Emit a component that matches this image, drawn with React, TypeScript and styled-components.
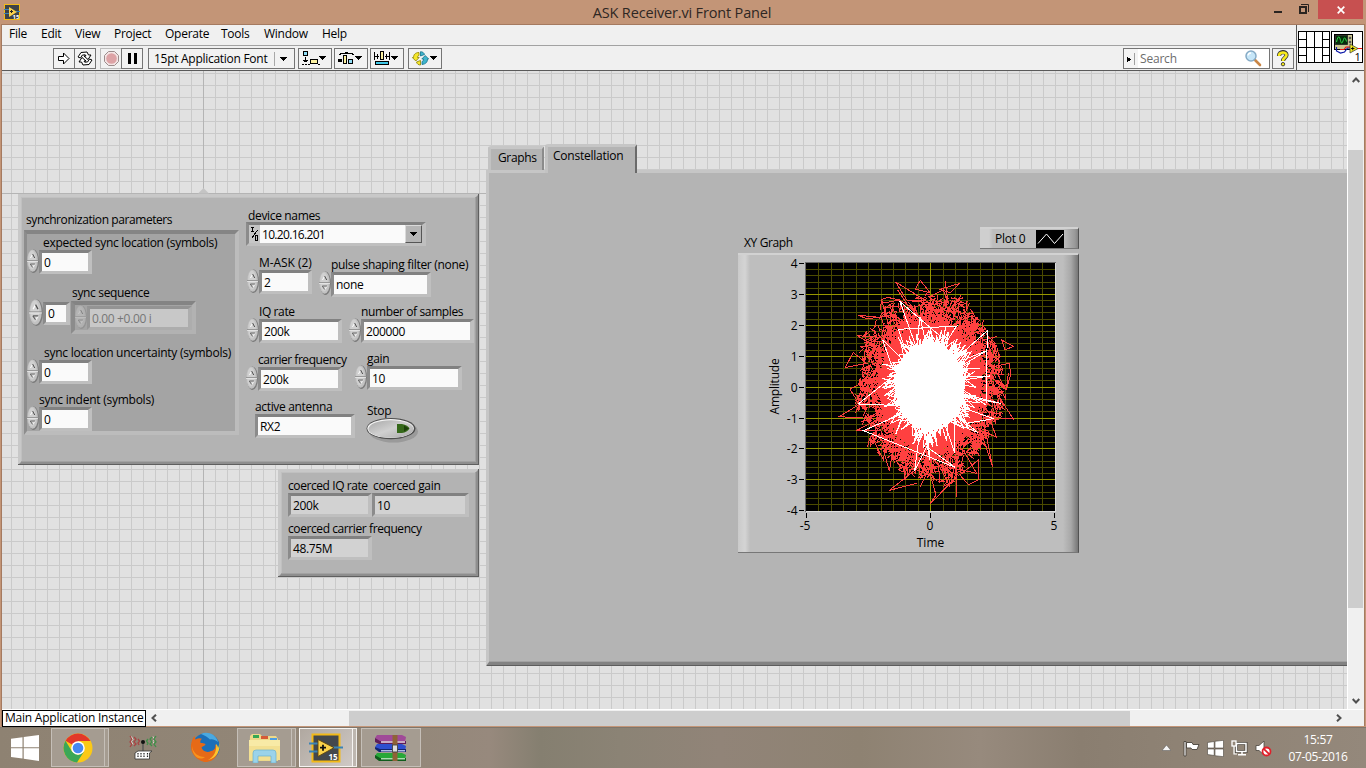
import React from "react";
import styled, { createGlobalStyle, css } from "styled-components";

const GlobalStyle = createGlobalStyle`
  * { box-sizing: border-box; }
  body { margin: 0; overflow: hidden; }
  #root { font-family: "Open Sans", "Noto Sans", sans-serif; font-size: 12px; color: #000; }
  svg { display: block; flex: none; }
`;

/* ---------- window frame ---------- */

const Desktop = styled.div`
  width: 1366px;
  height: 768px;
  display: flex;
  flex-direction: column;
  background: #c39577;
`;

const TitleBar = styled.header`
  height: 24px;
  flex: none;
  display: grid;
  grid-template-columns: 100px 1fr 100px;
  background: #c39577;
`;

const TitleIcon = styled.div`
  padding: 4px 0 0 4px;
`;

const TitleText = styled.div`
  text-align: center;
  font-size: 14.5px;
  line-height: 26px;
  letter-spacing: -0.16px;
  padding-right: 2px;
  color: #2e2723;
`;

const WindowButtons = styled.div`
  display: flex;
  justify-content: flex-end;
  padding-right: 3px;
`;

const CloseButton = styled.div`
  width: 45px;
  height: 19px;
  background: #c75050;
  display: flex;
  align-items: center;
  justify-content: center;
`;

const WindowGlyph = styled.div<{ $w: number }>`
  width: ${(p) => p.$w}px;
  height: 19px;
`;

const WindowBody = styled.div`
  height: 702px;
  flex: none;
  margin: 0 1px;
  border: 1px solid #a57a60;
  border-bottom: 0;
  display: flex;
  flex-direction: column;
  background: #f0f0f0;
`;

const Header = styled.div`
  height: 46px;
  flex: none;
  display: flex;
  border-bottom: 1px solid #5a5a5a;
`;

const HeaderMain = styled.div`
  width: 1294px;
  display: flex;
  flex-direction: column;
`;

const MenuBar = styled.nav`
  height: 21px;
  display: flex;
  border-bottom: 1px solid #a2a2a2;
`;

const MenuItem = styled.span<{ $w: number }>`
  width: ${(p) => p.$w}px;
  line-height: 18px;
  letter-spacing: -0.25px;
  white-space: nowrap;
  &:first-child { margin-left: 7px; }
`;

const Toolbar = styled.div`
  display: flex;
  padding: 2px 2px 0 51px;
`;

const ToolButton = styled.div<{ $w: number; $ml?: number; $dim?: boolean }>`
  width: ${(p) => p.$w}px;
  height: 21px;
  margin-left: ${(p) => p.$ml ?? 0}px;
  border: 1px solid ${(p) => (p.$dim ? "#bcbcbc" : "#757575")};
  background: #f2f2f2;
  display: flex;
  align-items: center;
  justify-content: center;
  flex: none;
`;

const FontPicker = styled(ToolButton)`
  justify-content: flex-start;
  padding-left: 5px;
  letter-spacing: -0.28px;
  white-space: nowrap;
`;

const FontName = styled.span`
  width: 120px;
  line-height: 18px;
`;

const PickerArrow = styled.span`
  height: 14px;
  border-left: 1px solid #a8a8a8;
  display: flex;
  align-items: center;
  padding-left: 5px;
`;

const SearchBox = styled(ToolButton)`
  margin-left: auto;
  justify-content: flex-start;
  background: #fff;
`;

const SearchHandle = styled.span`
  width: 14px;
  height: 19px;
  background: #f4f4f4;
  display: flex;
  align-items: center;
`;

const SearchText = styled.span`
  width: 106px;
  padding-left: 2px;
  color: #6d6d6d;
  line-height: 19px;
  letter-spacing: -0.2px;
`;

const HeaderSide = styled.div`
  flex: 1;
  border-left: 1px solid #5a5a5a;
  display: flex;
  gap: 1px;
  padding: 6px 0 0 1px;
`;

/* ---------- work area ---------- */

const WorkRow = styled.div`
  flex: 1;
  min-height: 0;
  display: flex;
`;

const Canvas = styled.main`
  position: relative;
  width: 1345px;
  overflow: hidden;
  background-color: #e1e1e1;
  background-image:
    linear-gradient(#b4b4b4, #b4b4b4),
    linear-gradient(#b4b4b4, #b4b4b4),
    linear-gradient(90deg, #cacaca 1px, transparent 1px),
    linear-gradient(#cacaca 1px, transparent 1px);
  background-size: 1px 100%, 100% 1px, 12px 12px, 12px 12px;
  background-position: 201px 0, 0 122px, 9px 0, 0 2px;
  background-repeat: no-repeat, no-repeat, repeat, repeat;
`;

const OriginMark = styled.svg`
  position: absolute;
  left: 196px;
  top: 117px;
`;

const VScroll = styled.div`
  flex: 1;
  border-left: 1px solid #fff;
  padding-right: 1px;
  display: flex;
  flex-direction: column;
  align-items: center;
`;

const VThumb = styled.div`
  width: 100%;
  height: 458px;
  margin-top: 63px;
  background: #cdcdcd;
`;

const VArrow = styled.div<{ $mt: number }>`
  height: 10px;
  margin-top: ${(p) => p.$mt}px;
`;

const BottomRow = styled.div`
  height: 17px;
  flex: none;
  display: flex;
  align-items: center;
  border-top: 1px solid #fff;
`;

const InstanceLabel = styled.div`
  width: 144px;
  height: 17px;
  border: 1px solid #000;
  background: #fff;
  line-height: 13px;
  padding-left: 2px;
  letter-spacing: -0.22px;
  white-space: nowrap;
`;

const HThumb = styled.div`
  width: 781px;
  height: 15px;
  margin-left: 190px;
  background: #cdcdcd;
`;

/* ---------- front panel objects ---------- */

const Cluster = styled.section<{ $x: number; $y: number; $w: number; $h: number }>`
  position: absolute;
  left: ${(p) => p.$x}px;
  top: ${(p) => p.$y}px;
  width: ${(p) => p.$w}px;
  height: ${(p) => p.$h}px;
  border: 3px solid;
  border-color: #c8c8c8 #8e8e8e #8e8e8e #c8c8c8;
  background: #b3b3b3;
  box-shadow: inset -1px -1px #a2a2a2, inset 1px 1px #c0c0c0;
  display: flex;
  &::after {
    content: "";
    position: absolute;
    inset: -3px;
    border: solid #5f5f5f;
    border-width: 0 1px 1px 0;
  }
`;

const SyncColumn = styled.div`
  width: 225px;
  padding: 15px 0 0 3px;
`;

const SettingsColumn = styled.div`
  flex: 1;
  padding-top: 10px;
`;

const CoercedColumn = styled.div`
  padding: 5px 0 0 7px;
`;

const Caption = styled.div`
  height: 15px;
  line-height: 15px;
  padding-left: 2px;
  letter-spacing: -0.42px;
  white-space: nowrap;
`;

const SyncBox = styled.div`
  width: 215px;
  height: 205px;
  margin-top: 3px;
  border: 4px solid;
  border-left-width: 3px;
  border-color: #858585 #bcbcbc #bcbcbc #8d8d8d;
  background: #a4a4a4;
`;

const Row = styled.div<{ $h: number }>`
  height: ${(p) => p.$h}px;
  display: flex;
`;

const ControlRoot = styled.div<{ $w: number; $ml: number; $mt: number }>`
  width: ${(p) => p.$w}px;
  flex: none;
  margin: ${(p) => p.$mt}px 0 0 ${(p) => p.$ml}px;
`;

const ControlLabel = styled.div<{ $indent: number; $ls: number }>`
  height: 15px;
  line-height: 17px;
  padding-left: ${(p) => p.$indent}px;
  letter-spacing: ${(p) => p.$ls}px;
  white-space: nowrap;
`;

const ControlBody = styled.div`
  display: flex;
  align-items: flex-start;
`;

const Recess = styled.div<{ $w: number; $h: number; $mt?: number; $tone?: "edit" | "read" | "dim" }>`
  width: ${(p) => p.$w}px;
  height: ${(p) => p.$h}px;
  margin-top: ${(p) => p.$mt ?? 1}px;
  flex: none;
  border: 3px solid;
  border-width: 3px 4px 3px 3px;
  border-color: #818181 #bfbfbf #bfbfbf #8b8b8b;
  background: #fafafa;
  padding-left: 2px;
  display: flex;
  align-items: center;
  line-height: 17px;
  letter-spacing: -0.35px;
  white-space: nowrap;
  ${(p) => p.$tone === "read" && css`background: #d2d2d2;`}
  ${(p) =>
    p.$tone === "dim" &&
    css`
      background: #c8c8c8;
      color: #767676;
      border-color: #949494 #adadad #adadad #969696;
    `}
`;

const ArrayFrame = styled.div`
  width: 125px;
  height: 33px;
  margin: 2px 0 0 1px;
  border: 4px solid;
  border-color: #848484 #b2b2b2 #b2b2b2 #8c8c8c;
  background: #a4a4a4;
  display: flex;
`;

const DeviceBox = styled.div`
  width: 180px;
  height: 24px;
  border: 3px solid;
  border-right-width: 4px;
  border-color: #818181 #bfbfbf #bfbfbf #8b8b8b;
  background: #fafafa;
  display: flex;
`;

const IoTag = styled.div`
  width: 11px;
  background: #c6c6c6;
`;

const DeviceValue = styled.div`
  flex: 1;
  padding-left: 2px;
  line-height: 19px;
  letter-spacing: -0.68px;
`;

const DropButton = styled.div`
  width: 17px;
  height: 18px;
  background: #b5b5b5;
  border: 1px solid;
  border-color: #dadada #555 #555 #dadada;
  display: flex;
  align-items: center;
  justify-content: center;
`;

/* ---------- tab control ---------- */

const TabControl = styled.section`
  position: absolute;
  left: 484px;
  top: 73px;
  width: 900px;
`;

const TabRow = styled.div`
  height: 26px;
  display: flex;
  align-items: flex-end;
  padding-left: 2px;
`;

const Tab = styled.div<{ $active?: boolean; $w: number }>`
  width: ${(p) => p.$w}px;
  height: ${(p) => (p.$active ? 29 : 24)}px;
  margin: 0 0 ${(p) => (p.$active ? -3 : 0)}px ${(p) => (p.$active ? 1 : 0)}px;
  z-index: 1;
  border: solid;
  border-width: 3px 2px 0 3px;
  border-color: #c6c6c6 ${(p) => (p.$active ? "#6a6a6a" : "#8b8b8b")} #b4b4b4 #c2c2c2;
  border-radius: 3px 2px 0 0;
  background: #b4b4b4;
  padding-left: ${(p) => (p.$active ? 5 : 7)}px;
  line-height: 18px;
  letter-spacing: ${(p) => (p.$active ? -0.24 : -0.35)}px;
`;

const TabPage = styled.div`
  height: 496px;
  border: solid;
  border-width: 3px 0 4px 3px;
  border-color: #c6c6c6 #666 #828282 #c6c6c6;
  background: #b4b4b4;
  box-shadow: inset 0 -1px #a2a2a2;
  padding: 54px 0 0 249px;
  position: relative;
  &::after {
    content: "";
    position: absolute;
    left: -2px;
    right: 0;
    bottom: -4px;
    height: 1px;
    background: #5c5c5c;
  }
`;

const GraphHead = styled.div`
  width: 341px;
  height: 26px;
  display: flex;
  justify-content: space-between;
`;

const GraphTitle = styled.div`
  padding: 8px 0 0 6px;
  line-height: 16px;
  letter-spacing: -0.37px;
`;

const metalFrame = css`
  border: solid;
  border-width: 2px 1px 1px 0;
  border-color: #d2d2d2 #525252 #777 #bbb;
`;

const PlotLegend = styled.div`
  ${metalFrame}
  width: 99px;
  height: 22px;
  display: flex;
  align-items: center;
  padding-left: 15px;
  letter-spacing: -0.2px;
  background: linear-gradient(90deg, #cfcfcf 0 9px, #bdbdbd 13px 84px, #999 95px, #7c7c7c 99px);
`;

const LegendSwatch = styled.svg`
  margin-left: auto;
  margin-right: 14px;
`;

const GraphFrame = styled.div`
  ${metalFrame}
  width: 341px;
  height: 300px;
  background: linear-gradient(90deg, #cacaca 0, #d4d4d4 7px, #bebebe 12px, #bebebe 325px, #a8a8a8 333px, #6f6f6f 341px);
`;

/* ---------- taskbar ---------- */

const Taskbar = styled.footer`
  flex: 1;
  margin-top: 1px;
  display: flex;
  background: linear-gradient(90deg, #8e8272 0, #94887a 420px, #97897d 490px, #857f70 540px, #8b8375 620px, #918478 720px, #8e8272 860px, #978a7d 980px, #8a7e70 1080px, #8f8375 1200px, #94887b 1366px);
  border-top: 1px solid #7f766b;
`;

const TaskButton = styled.div<{ $w: number; $state?: "open" | "active" }>`
  width: ${(p) => p.$w}px;
  height: 39px;
  flex: none;
  display: flex;
  align-items: center;
  justify-content: center;
  border: 1px solid transparent;
  ${(p) => p.$state === "open" && css`border-color: #c5bfb8; background: #a59c91;`}
  ${(p) => p.$state === "active" && css`border-color: #f6f4f2; background: linear-gradient(135deg, #b0a8a0, #cfc9c5);`}
`;

const StackEdge = styled.div<{ $active?: boolean }>`
  width: 4px;
  height: 39px;
  border: 1px solid ${(p) => (p.$active ? "#efedea" : "#c5bfb8")};
  border-left: 0;
  background: ${(p) => (p.$active ? "#bdb6af" : "#a59c91")};
`;

const Gap = styled.div<{ $w: number }>`
  width: ${(p) => p.$w}px;
  flex: none;
`;

const Tray = styled.div`
  margin-left: auto;
  display: flex;
  align-items: center;
  padding-right: 10px;
`;

const Clock = styled.div`
  width: 76px;
  margin-left: 8px;
  text-align: center;
  color: #fff;
  line-height: 17px;
  letter-spacing: -0.35px;
  white-space: nowrap;
`;

/* ---------- small drawings ---------- */

const Caret = () => (
  <svg width="7" height="4" viewBox="0 0 7 4" shapeRendering="crispEdges"><path d="M0 0h7L3.5 4z" /></svg>
);

function Spinner({ large, dim }: { large?: boolean; dim?: boolean }) {
  const w = large ? 14 : 12;
  const h = large ? 27 : 24;
  return (
    <svg width={w} height={h} viewBox="0 0 12 24" preserveAspectRatio="none" opacity={dim ? 0.4 : 1}>
      <ellipse cx="6.4" cy="12.2" rx="5.6" ry="11.7" fill="#7c7c7c" />
      <ellipse cx="5.6" cy="11.6" rx="5.3" ry="11.2" fill="#c2c2c2" />
      <ellipse cx="5" cy="11" rx="3.8" ry="9.6" fill="#d0d0d0" />
      <path d="M0 11.500h12" stroke="#8a8a8a" strokeWidth=".9" />
      <path d="M0 12.400h11" stroke="#ececec" strokeWidth=".8" />
      <path d="M3.500 9L5.600 5" stroke="#fff" fill="none" />
      <path d="M5.600 5L7.700 9" stroke="#4a4a4a" fill="none" />
      <path d="M8 15L5.800 18.500" stroke="#f4f4f4" fill="none" />
      <path d="M3.300 15H8M3.300 15l2.300 3.500" stroke="#5c5c5c" strokeWidth=".9" fill="none" />
    </svg>
  );
}

const LvIcon = () => (
  <svg width="34" height="30" viewBox="0 0 34 30">
    <rect x="3.500" y="1.500" width="27" height="27" fill="#44484c" stroke="#f3ba17" strokeWidth="2" />
    <path d="M0 10.500h9M0 18.500h9M24 14.500h10" stroke="#3a84b5" strokeWidth="2" />
    <path d="M9 6.500v17l16-8.800z" fill="#fbd24a" stroke="#5c450c" strokeWidth=".9" />
    <path d="M11 14.700h6M14 11.700v6" stroke="#111" strokeWidth="1.800" />
    <text x="19.500" y="26.500" fontSize="8" fontWeight="700" fill="#fff">15</text>
  </svg>
);

const StopButton = () => (
  <svg width="56" height="28" viewBox="0 0 56 28">
    <defs>
      <linearGradient id="stopFace" x1="0" y1="0" x2="1" y2="1">
        <stop offset="0" stopColor="#a8a8a8" />
        <stop offset=".5" stopColor="#d0d0d0" />
        <stop offset="1" stopColor="#a8a8a8" />
      </linearGradient>
    </defs>
    <ellipse cx="27.500" cy="14.500" rx="24.500" ry="11" fill="#929292" opacity=".75" />
    <ellipse cx="25" cy="11.600" rx="24.500" ry="10.600" fill="#4e4e4e" />
    <ellipse cx="24.600" cy="11.500" rx="23.300" ry="9.500" fill="#f4f4f4" />
    <ellipse cx="25" cy="12" rx="22.600" ry="8.700" fill="url(#stopFace)" />
    <path d="M31 7h5c4 .7 6.500 2.500 7.500 4.500-1.500 2.500-4 4-7.500 4.500h-5z" fill="#35681a" />
    <path d="M38 8.500l5 3-5 3z" fill="#1d3f0a" />
  </svg>
);

/* ---------- front panel control ---------- */

type ControlProps = {
  label: string;
  value: string;
  box: number;
  boxH?: number;
  boxMt?: number;
  indent?: number;
  ml?: number;
  mt?: number;
  ls?: number;
  spinner?: boolean;
  tone?: "edit" | "read";
};

function Control({ label, value, box, boxH = 24, boxMt = 1, indent = 0, ml = 0, mt = 0, ls = -0.28, spinner = true, tone = "edit" }: ControlProps) {
  return (
    <ControlRoot $w={box + (spinner ? 12 : 0)} $ml={ml} $mt={mt}>
      <ControlLabel $indent={indent} $ls={ls}>{label}</ControlLabel>
      <ControlBody>
        {spinner && <Spinner />}
        <Recess $w={box} $h={boxH} $mt={boxMt} $tone={tone}>{value}</Recess>
      </ControlBody>
    </ControlRoot>
  );
}

/* ---------- constellation plot ---------- */

const SX = 24.9;
const SY = 31;

function rng(seed: number) {
  let s = seed;
  return () => {
    s = (s + 0x6d2b79f5) | 0;
    let t = Math.imul(s ^ (s >>> 15), 1 | s);
    t = (t + Math.imul(t ^ (t >>> 7), 61 | t)) ^ t;
    return ((t ^ (t >>> 14)) >>> 0) / 4294967296;
  };
}

const at = (a: number, r: number) =>
  `${(124 + Math.cos(a) * r * SX).toFixed(1)} ${(123.5 + Math.sin(a) * r * SY).toFixed(1)}`;

/* Short chords that thin out with the distance from the centre. */
function fringe() {
  const rand = rng(41);
  let d = "";
  for (let i = 0; i < 2300; i++) {
    const a = rand() * Math.PI * 2;
    const wobble = 0.12 * Math.sin(a * 5 + 1) + 0.08 * Math.sin(a * 11);
    const reach = 1.95 + Math.pow(rand(), 2.3) * (1.1 + wobble);
    d += `M${at(a, reach)}`;
    for (let k = 0; k < 2; k++) {
      d += `L${at(a + (rand() - 0.5) * 0.2, reach - rand() * 0.42 + 0.04)}`;
    }
  }
  return d;
}

/* Rays from the core, most of them short, with uneven sides. */
function spikes() {
  const rand = rng(19);
  let d = "";
  for (let i = 0; i < 300; i++) {
    const a = rand() * Math.PI * 2;
    const r = 1.38 + Math.pow(rand(), 3.2) * 0.7;
    d += `M${at(a - 0.5 * (rand() - 0.4), 1.28)}L${at(a, r)}L${at(a + 0.5 * (rand() - 0.4), 1.28)}`;
  }
  return d;
}

const RED_TRACES =
  "M410 540L327 590L400 594M345 443L370 398L410 430ZM360 508L410 480L380 540ZM385 286L450 292L410 296ZM382 347L450 352L420 370ZM497 186L600 250L530 240ZM556 207L571 181L600 218ZM690 190L630 208L660 218ZM645 184L655 250L640 270M718 250L700 290L725 280M850 379L815 360L825 390ZM838 430L842 465L828 510L790 440ZM800 520L850 597L790 592M755 640L788 742L770 650M780 600L800 652L750 630M745 780L715 794L690 765L745 720ZM679 830L678 740L690 720M600 852L618 825L600 760M600 852L680 770M560 790L478 811L550 755M440 600L377 633L450 632M460 690L478 752L490 680M450 640L420 680L430 640M452 240L472 232L510 240L455 250M430 660L460 720L470 660M520 740L525 780L560 720M570 800L600 740M630 790L625 730L660 800L650 730M760 300L752 340L730 300M800 350L760 360L800 380M503 210L530 250L505 240M600 230L640 210L650 240M524 780L526 700L610 770L560 750M650 740L740 760L700 690M835 460L830 500L800 480M450 270L455 240L480 330";
const WHITE_TRACES =
  "M565 400L510 245L635 352M640 380L680 318L505 328L530 400M520 420L458 360L490 450M690 405L772 332L768 555L700 510M510 557L385 552L500 460M700 530L812 550L690 520M520 580L400 632L675 742L590 680M570 630L554 752L610 640M690 560L790 596L710 610L680 580M670 580L743 637L650 600M640 600L675 700L672 600M590 620L600 720L580 620M700 420L770 392L690 440M560 380L570 290L590 380M700 470L780 468L700 480";

const COLS = Array.from({ length: 20 }, (_, i) => i);
const ROWS = Array.from({ length: 40 }, (_, i) => i);

function Plot() {
  return (
    <svg width="340" height="297" viewBox="738 255 340 297" fontSize="12">
      <g shapeRendering="crispEdges">
        <rect x="805" y="262" width="251" height="250" fill="#6c6c6c" />
        <rect x="806" y="263" width="250" height="249" fill="#dcdcdc" />
        <rect x="806" y="263" width="249" height="248" fill="#000" />
        {ROWS.slice(1).map((i) => (
          <rect key={i} x="806" y={Math.round(263 + i * 6.18)} width="249" height="1" fill="#4b4b00" />
        ))}
        {COLS.slice(1).map((i) => (
          <rect key={i} x={Math.round(806 + i * 12.42)} y="263" width="1" height="248" fill={i === 10 ? "#969600" : "#4b4b00"} />
        ))}
        {[1, 2, 3, 4, 5, 6, 7].map((i) => (
          <rect key={i} x="806" y={Math.round(263 + i * 30.9)} width="249" height="1" fill="#969600" />
        ))}
      </g>
      <g transform="translate(806 263)" fill="none" shapeRendering="crispEdges">
        <ellipse cx="124" cy="122" rx="50" ry="62" fill="#ff4040" />
        <path d={fringe()} stroke="#ff4040" />
        <g transform="translate(-76 -43) scale(.33333)">
          <path d={RED_TRACES} stroke="#ff4040" vectorEffect="non-scaling-stroke" />
        </g>
        <ellipse cx="123.500" cy="122" rx="35" ry="42" fill="#fff" />
        <path d={spikes()} stroke="#fff" />
        <g transform="translate(-76 -43) scale(.33333)">
          <path d={WHITE_TRACES} stroke="#fff" vectorEffect="non-scaling-stroke" />
        </g>
      </g>
      {[4, 3, 2, 1, 0, -1, -2, -3, -4].map((v, i) => {
        const y = Math.round(263 + i * 30.9);
        return (
          <g key={v}>
            <rect x="799" y={y} width="5" height="1" />
            <text x="797.500" y={y + 5} textAnchor="end">{v}</text>
          </g>
        );
      })}
      {[-5, 0, 5].map((v, i) => (
        <g key={v}>
          <rect x={806 + i * 124} y="513" width="1" height="5" />
          <text x={(v < 0 ? 805 : 806) + i * 124} y="530" textAnchor="middle">{v}</text>
        </g>
      ))}
      <text x="930.500" y="547" textAnchor="middle">Time</text>
      <text transform="translate(779 386.500) rotate(-90)" textAnchor="middle" letterSpacing="-.2">Amplitude</text>
    </svg>
  );
}

const MENUS: [string, number][] = [
  ["File", 32], ["Edit", 34], ["View", 39], ["Project", 51], ["Operate", 56], ["Tools", 43], ["Window", 58], ["Help", 30],
];

export default function App() {
  return (
    <Desktop>
      <GlobalStyle />
      <TitleBar>
        <TitleIcon>
          <svg width="16" height="16" viewBox="0 0 16 16">
            <rect x=".5" y=".5" width="15" height="15" fill="#3f4347" stroke="#f3ba17" />
            <path d="M0 5.500h5M0 9.500h5M12 7.500h4" stroke="#3a84b5" />
            <path d="M5 3v10l8-5z" fill="#fbd24a" />
            <path d="M6 7.500h3M7.500 6v3" stroke="#222" />
            <text x="8.500" y="14.500" fontSize="6" fontWeight="700" fill="#fff">15</text>
          </svg>
        </TitleIcon>
        <TitleText>ASK Receiver.vi Front Panel</TitleText>
        <WindowButtons>
          <WindowGlyph $w={25}>
            <svg width="25" height="19"><rect x="1" y="11" width="8" height="2" fill="#2a2420" /></svg>
          </WindowGlyph>
          <WindowGlyph $w={20}>
            <svg width="20" height="19" fill="none" stroke="#2a2420"><path d="M3 4.500h7.500V12" /><rect x="2" y="7" width="6" height="6" strokeWidth="2" /></svg>
          </WindowGlyph>
          <CloseButton>
            <svg width="8" height="8" viewBox="0 0 8 8"><path d="M.7 .7l6.600 6.600M7.300 .7L.7 7.300" stroke="#fff" strokeWidth="1.700" /></svg>
          </CloseButton>
        </WindowButtons>
      </TitleBar>

      <WindowBody>
        <Header>
          <HeaderMain>
            <MenuBar>
              {MENUS.map(([name, w]) => <MenuItem key={name} $w={w}>{name}</MenuItem>)}
            </MenuBar>
            <Toolbar>
              <ToolButton $w={22}>
                <svg width="12" height="13" viewBox="0 0 12 13"><path d="M.500 4.500h5V1l5.500 5.500L5.500 12V8.500h-5z" fill="#fff" stroke="#000" /></svg>
              </ToolButton>
              <ToolButton $w={22} $ml={-1}>
                <svg width="16" height="15" viewBox="0 0 16 15" fill="#fff" stroke="#000">
                  <path d="M1 6L4 1.500l6-.500L11.500 4h2.500l-3 4.500L7 5h2l-.7-1.200-3 .3L3.500 7z" />
                  <path d="M15 9l-3 4.500-6 .500L4.500 11H2l3-4.500L9 10H7l.7 1.200 3-.3L12.500 8z" />
                </svg>
              </ToolButton>
              <ToolButton $w={22} $ml={4} $dim>
                <svg width="15" height="15" viewBox="0 0 15 15"><path d="M4.500 .5h6l4 4v6l-4 4h-6l-4-4v-6z" fill="#f3e4e4" stroke="#9c8c8c" /><circle cx="7.500" cy="7.500" r="5.300" fill="#dda3a6" /></svg>
              </ToolButton>
              <ToolButton $w={22} $ml={-1}>
                <svg width="9" height="11"><path d="M0 0h3v11H0zM6 0h3v11H6z" /></svg>
              </ToolButton>
              <FontPicker $w={147} $ml={5}>
                <FontName>15pt Application Font</FontName>
                <PickerArrow><Caret /></PickerArrow>
              </FontPicker>
              <ToolButton $w={34} $ml={3}>
                <svg width="26" height="15" viewBox="0 0 26 15" shapeRendering="crispEdges">
                  <rect x="1.500" y=".5" width="4" height="4" fill="#8fdcf5" stroke="#000" />
                  <path d="M3 6h1v4H3zM1 9h5v1H1zM2 10h3v1H2zM0 13h2v1H0zM3 13h2v1H3zM6 13h2v1H6zM16 13h2v1h-2z" />
                  <rect x="8.500" y="8.500" width="7" height="4" fill="#fbf0a0" stroke="#000" />
                  <path d="M17 5h7l-3.500 4z" />
                </svg>
              </ToolButton>
              <ToolButton $w={34} $ml={2}>
                <svg width="26" height="15" viewBox="0 0 26 15" shapeRendering="crispEdges">
                  <path d="M1 3h1V2h5V1h3v1h5v1h1v1h-2V3H3v1H1zM0 8h4v3H0z" />
                  <rect x="5.500" y="4.500" width="3" height="8" fill="#fbf0a0" stroke="#000" />
                  <rect x="10.500" y="8.500" width="4" height="4" fill="#8fdcf5" stroke="#000" />
                  <path d="M17 5h7l-3.500 4z" />
                </svg>
              </ToolButton>
              <ToolButton $w={34} $ml={2}>
                <svg width="26" height="15" viewBox="0 0 26 15" shapeRendering="crispEdges">
                  <path d="M0 1h1v8H0zM15 1h1v8h-1zM1 5h4v1H1zM11 5h4v1h-4zM3 3h1v5H3zM12 3h1v5h-1z" />
                  <rect x="6.500" y=".5" width="3" height="8" fill="#fbf0a0" stroke="#000" />
                  <rect x="1.500" y="10.500" width="13" height="3" fill="#3fc6e6" stroke="#000" />
                  <path d="M17 5h7l-3.500 4z" />
                </svg>
              </ToolButton>
              <ToolButton $w={34} $ml={4}>
                <svg width="27" height="15" viewBox="0 0 27 15">
                  <path d="M7 1.500C3 1.500 1.500 4 1.500 6.500H.3L3.800 10l3.400-3.500H5.500C5.500 5.300 6 4.700 7 4.500zM4.500 11l4-1.500V14c-2 0-3.500-1-4-3z" fill="#f5e62a" stroke="#8b8200" strokeWidth=".8" />
                  <path d="M10 13.500c4-.5 5.500-2.500 5.500-5.500h1.200l-3.500-3.500L9.800 8h1.700c0 1.500-.5 2.300-1.500 2.500zM12.500 3.500L8.500 5V.7c2 0 3.500 1 4 2.800z" fill="#3fb4cc" stroke="#12718a" strokeWidth=".8" />
                  <path d="M18 5h7l-3.500 4z" shapeRendering="crispEdges" />
                </svg>
              </ToolButton>
              <SearchBox $w={147} style={{ marginLeft: "auto" }}>
                <SearchHandle>
                  <svg width="12" height="12" viewBox="0 0 12 12" shapeRendering="crispEdges"><path d="M3 4h1v5H3zM4 5h2v3H4zM6 6h1v1H6z" /><path d="M10 0h1v12h-1z" fill="#a0a0a0" /></svg>
                </SearchHandle>
                <SearchText>Search</SearchText>
                <svg width="18" height="17" viewBox="0 0 18 17">
                  <path d="M10.500 9.500l5.500 5.500" stroke="#c98646" strokeWidth="2.600" strokeLinecap="round" />
                  <circle cx="7" cy="6" r="5" fill="#c6e6f8" stroke="#86abc6" strokeWidth="1.500" />
                  <path d="M4 5.500a3 3 0 013-2.500" stroke="#fff" strokeWidth="1.300" fill="none" />
                </svg>
              </SearchBox>
              <ToolButton $w={22} $ml={2}>
                <svg width="14" height="17" viewBox="0 0 14 17" fill="none">
                  <path d="M3 6C3 1 10.500 1 10.500 5c0 2.800-3.500 2.800-3.500 6" stroke="#333" strokeWidth="4.200" />
                  <path d="M3 6C3 1.500 10.500 1.500 10.500 5c0 2.600-3.500 2.600-3.500 6" stroke="#f7ea1c" strokeWidth="2.600" />
                  <circle cx="7" cy="14.200" r="1.700" fill="#f7ea1c" stroke="#333" strokeWidth=".9" />
                </svg>
              </ToolButton>
            </Toolbar>
          </HeaderMain>
          <HeaderSide>
            <svg width="32" height="32" viewBox="0 0 32 32" shapeRendering="crispEdges">
              <rect x=".5" y=".5" width="31" height="31" fill="#fff" stroke="#000" />
              <path d="M8.500 0v32M16.500 0v32M24.500 0v32M0 16.500h32M0 8.500h8M24 8.500h8M0 24.500h8M24 24.500h8" stroke="#000" />
            </svg>
            <svg width="32" height="32" viewBox="0 0 32 32">
              <rect x=".5" y=".5" width="31" height="31" fill="#fff" stroke="#000" />
              <rect x="3.500" y="3.500" width="18" height="15" fill="#c9c691" stroke="#000" />
              <rect x="4.500" y="4.500" width="12" height="9" fill="#052d0a" stroke="#222" strokeWidth=".8" />
              <path d="M5.500 11c1.500-7 3-6 4-1.500s2 2 3-1 2-1.500 3 2" stroke="#2fe04a" fill="none" />
              <circle cx="19" cy="7" r="1.300" fill="#555" /><circle cx="19" cy="11" r="1.300" fill="#555" />
              <path d="M5.500 16v4l4 2 4-1 3-4h3" stroke="#0c17a8" strokeWidth="1.200" fill="none" />
              <path d="M9 18.500h4l2-2.500h5M25 17.500h6" stroke="#f01010" strokeWidth="1.200" fill="none" />
              <path d="M19 13v9l8-4.500z" fill="#f6ef1d" stroke="#444" strokeWidth=".8" />
              <path d="M20 17.500h3.500M21.700 15.800v3.500" stroke="#000" strokeWidth=".9" />
              <text x="23.500" y="29.500" fontSize="11">1</text>
            </svg>
          </HeaderSide>
        </Header>

        <WorkRow>
          <Canvas>
            <OriginMark width="11" height="6"><path d="M0 5.500L5.500 0 11 5.500z" fill="#c4c4c4" /></OriginMark>

            <Cluster $x={16} $y={123} $w={461} $h={271}>
              <SyncColumn>
                <Caption>synchronization parameters</Caption>
                <SyncBox>
                  <Row $h={50}><Control label="expected sync location (symbols)" value="0" box={53} indent={16} /></Row>
                  <Row $h={60}>
                    <ControlRoot $w={180} $ml={2} $mt={0}>
                      <ControlLabel $indent={43} $ls={-0.34}>sync sequence</ControlLabel>
                      <ControlBody>
                        <Spinner large />
                        <Recess $w={27} $h={23} $mt={3}>0</Recess>
                        <ArrayFrame>
                          <Spinner dim />
                          <Recess $w={105} $h={24} $mt={1} $tone="dim">0.00 +0.00 i</Recess>
                        </ArrayFrame>
                      </ControlBody>
                    </ControlRoot>
                  </Row>
                  <Row $h={47}><Control label="sync location uncertainty (symbols)" value="0" box={53} indent={17} ls={-0.25} /></Row>
                  <Row $h={44}><Control label="sync indent (symbols)" value="0" box={53} indent={12} ls={-0.25} /></Row>
                </SyncBox>
              </SyncColumn>

              <SettingsColumn>
                <Row $h={47}>
                  <ControlRoot $w={180} $ml={0} $mt={0}>
                    <ControlLabel $indent={2} $ls={-0.34}>device names</ControlLabel>
                    <DeviceBox>
                      <IoTag>
                        <svg width="11" height="18" viewBox="0 0 11 18" fill="none" stroke="#000" shapeRendering="crispEdges">
                          <path d="M2 2.500h3M3.500 2v5M2 6.500h3M8.500 5L3 13M6.500 10.500h2v5h-2z" />
                        </svg>
                      </IoTag>
                      <DeviceValue>10.20.16.201</DeviceValue>
                      <DropButton><Caret /></DropButton>
                    </DeviceBox>
                  </ControlRoot>
                </Row>
                <Row $h={49}>
                  <Control label="M-ASK (2)" value="2" box={53} indent={12} ml={1} ls={-0.05} />
                  <Control label="pulse shaping filter (none)" value="none" box={100} boxH={25} indent={12} ml={7} mt={2} ls={-0.3} />
                </Row>
                <Row $h={48}>
                  <Control label="IQ rate" value="200k" box={83} indent={12} ml={1} ls={-0.4} />
                  <Control label="number of samples" value="200000" box={113} indent={12} ml={7} ls={-0.38} />
                </Row>
                <Row $h={47}>
                  <Control label="carrier frequency" value="200k" box={84} indent={12} ls={-0.46} />
                  <Control label="gain" value="10" box={95} indent={12} ml={13} mt={-1} />
                </Row>
                <Row $h={44}>
                  <Control label="active antenna" value="RX2" box={100} ml={9} indent={0} spinner={false} ls={-0.34} />
                  <ControlRoot $w={56} $ml={11} $mt={4}>
                    <ControlLabel $indent={1} $ls={-0.27}>Stop</ControlLabel>
                    <StopButton />
                  </ControlRoot>
                </Row>
              </SettingsColumn>
            </Cluster>

            <Cluster $x={276} $y={398} $w={201} $h={108}>
              <CoercedColumn>
                <Row $h={43}>
                  <Control label="coerced IQ rate" value="200k" box={84} indent={0} spinner={false} tone="read" ls={-0.42} />
                  <Control label="coerced gain" value="10" box={97} indent={1} spinner={false} tone="read" ls={-0.3} />
                </Row>
                <Row $h={43}>
                  <Control label="coerced carrier frequency" value="48.75M" box={84} indent={0} spinner={false} tone="read" ls={-0.41} />
                </Row>
              </CoercedColumn>
            </Cluster>

            <TabControl>
              <TabRow>
                <Tab $w={56}>Graphs</Tab>
                <Tab $w={92} $active>Constellation</Tab>
              </TabRow>
              <TabPage>
                <GraphHead>
                  <GraphTitle>XY Graph</GraphTitle>
                  <PlotLegend>
                    Plot 0
                    <LegendSwatch width="28" height="18" viewBox="0 0 28 18">
                      <rect width="28" height="18" fill="#000" />
                      <path d="M2 13.500L10.500 4l8 9.500L27 4" stroke="#fff" fill="none" />
                    </LegendSwatch>
                  </PlotLegend>
                </GraphHead>
                <GraphFrame><Plot /></GraphFrame>
              </TabPage>
            </TabControl>
          </Canvas>
          <VScroll>
            <VArrow $mt={6}>
              <svg width="8" height="6" viewBox="0 0 8 6"><path d="M.7 5L4 1.500 7.300 5" stroke="#505050" strokeWidth="2" fill="none" /></svg>
            </VArrow>
            <VThumb />
            <VArrow $mt={90}>
              <svg width="8" height="6" viewBox="0 0 8 6"><path d="M.7 1L4 4.500 7.300 1" stroke="#505050" strokeWidth="2" fill="none" /></svg>
            </VArrow>
          </VScroll>
        </WorkRow>

        <BottomRow>
          <InstanceLabel>Main Application Instance</InstanceLabel>
          <Gap $w={4} />
          <svg width="8" height="8" viewBox="0 0 8 8"><path d="M6 .7L2.500 4 6 7.300" stroke="#505050" strokeWidth="2" fill="none" /></svg>
          <Gap $w={1} />
          <HThumb />
          <Gap $w={205} />
          <svg width="8" height="8" viewBox="0 0 8 8"><path d="M2 .7L5.500 4 2 7.300" stroke="#505050" strokeWidth="2" fill="none" /></svg>
        </BottomRow>
      </WindowBody>

      <Taskbar>
        <Gap $w={10} />
        <TaskButton $w={29}>
          <svg width="28" height="26" viewBox="0 0 28 26" fill="#fff"><path d="M0 3.800L11.500 2.200v10H0zM12.700 2L28 0v12.200H12.700zM0 13.300h11.500v10.200L0 22zM12.700 13.300H28V26l-15.300-2.200z" /></svg>
        </TaskButton>
        <Gap $w={12} />
        <TaskButton $w={54} $state="open">
          <svg width="30" height="30" viewBox="0 0 30 30">
            <circle cx="15" cy="15" r="14.500" fill="#fbc916" />
            <path d="M15 15L2.500 7.700A14.500 14.500 0 0127.600 8H15z" fill="#e2382a" />
            <path d="M2.500 7.700A14.500 14.500 0 0014 29.500l7-11-6 3.500-6-3.500z" fill="#3aa757" />
            <circle cx="15" cy="15" r="6.800" fill="#fff" /><circle cx="15" cy="15" r="5.300" fill="#4688f1" />
          </svg>
        </TaskButton>
        <StackEdge />
        <Gap $w={15} />
        <TaskButton $w={38}>
          <svg width="28" height="26" viewBox="0 0 28 26" fill="none">
            <path d="M1 1l2 3-2 3 2 2-2 3M5 2l2 2-2 3 2 2-2 2M9 4l1.500 2L9 8l1 2" stroke="#a84444" strokeWidth="1.300" />
            <path d="M2.500 1.500l1.500 3-1.500 2 1.500 3M24 1.500l1.500 3-1.500 2 1.500 3" stroke="#f0e4e0" strokeWidth=".8" />
            <path d="M27 1l-2 3 2 3-2 2 2 3M23 2l-2 2 2 3-2 2 2 2M19 4l-1.500 2L19 8l-1 2" stroke="#3f8f48" strokeWidth="1.300" />
            <path d="M14 8v10" stroke="#555" strokeWidth="1.300" /><circle cx="14" cy="7" r="2" fill="#111" />
            <path d="M6 18l3-2h14l-2.500 2v6H6z" fill="#fff" stroke="#333" strokeWidth=".8" />
            <path d="M9 18v5M12 18v5M15 18v5M18.500 18v5" stroke="#222" strokeWidth="1.200" strokeDasharray="1.500 1" />
          </svg>
        </TaskButton>
        <Gap $w={24} />
        <TaskButton $w={38}>
          <svg width="31" height="31" viewBox="0 0 31 31">
            <circle cx="16" cy="15" r="13.800" fill="#1c6fb8" />
            <path d="M11 2c6-3 15 0 17 8-3-2-5-3-8-2.500-2-2-5-4-9-5.500z" fill="#4aa9e0" />
            <path d="M1 13C1.500 8.500 3 5.500 4.500 4l1 3.500C8 6 10 6 12 6.800 10.500 8 10 9 10.500 11c2.500 0 5 .5 5 1.500s-3.500 2-4 3c1 4 6 5.500 9.500 3.500 4-.5 5-4 4-7 3 3 4 7 2 11-3 5-7 7-11.500 7S0 24 1 13z" fill="#e66a17" />
            <path d="M29 10c2 8-2 16-11 18 6-3 9-9 8-16 1.500 1 2 3 2 4 1-1.500 1.200-4 1-6z" fill="#fbc52e" />
            <path d="M2 14c1 7 6 11 13 11-5 4-13 0-13-11z" fill="#f7941e" />
          </svg>
        </TaskButton>
        <Gap $w={13} />
        <TaskButton $w={55} $state="open">
          <svg width="33" height="30" viewBox="0 0 33 30">
            <path d="M2 3l2-2h8l2 2h14l2 3v22H1z" fill="#ecd98a" />
            <path d="M5 2h6v3H5z" fill="#35a853" /><path d="M13 3h7v3h-7z" fill="#d65b35" /><path d="M22 5h7v3h-7z" fill="#4f9de0" />
            <path d="M1 7h31v20H1z" fill="#f8eaa6" /><path d="M1 13h31v14H1z" fill="#f3e092" />
            <path d="M5 30V20q0-3 3-3h17q3 0 3 3v10h-5v-7H10v7z" fill="#9bd3ea" stroke="#6cb2cf" strokeWidth=".7" />
          </svg>
        </TaskButton>
        <StackEdge />
        <Gap $w={3} />
        <TaskButton $w={54} $state="active"><LvIcon /></TaskButton>
        <StackEdge $active />
        <Gap $w={4} />
        <TaskButton $w={60} $state="open">
          <svg width="34" height="26" viewBox="0 0 34 26">
            <path d="M3 0h25l4 2-1 5H6L1 3z" fill="#a04a98" /><path d="M1 3l5 3h26v3H5L1 7z" fill="#5e1d59" /><path d="M7 6h24v2H7z" fill="#c9a9c6" />
            <path d="M3 9h25l4 2-1 5H6l-5-4z" fill="#2f4fd0" /><path d="M1 12l5 2h26v3H5l-4-3z" fill="#14246e" /><path d="M7 15h24v1.500H7z" fill="#aeb8e2" />
            <path d="M3 18h25l4 2-1 5H6l-5-4z" fill="#27a838" /><path d="M1 20l5 3h26v3H5l-4-3z" fill="#0f5c1c" /><path d="M7 23h24v1.500H7z" fill="#a9dcae" />
            <path d="M18.500 0h5v26h-5z" fill="#8f6236" /><rect x="18.500" y="10" width="5" height="7" fill="#ddd" stroke="#444" strokeWidth=".9" />
          </svg>
        </TaskButton>

        <Tray>
          <svg width="9" height="6" viewBox="0 0 9 6"><path d="M4.500 0L9 5.500H0z" fill="#f4f4f4" stroke="#555" strokeWidth=".5" /></svg>
          <Gap $w={12} />
          <svg width="17" height="17" viewBox="0 0 17 17"><path d="M1 1.500h2V16H1zM3.500 2.500h5.500l1 2h6l-2 5H9l-1-1.500H3.500z" fill="#fff" stroke="#4a443d" strokeWidth=".9" /></svg>
          <Gap $w={7} />
          <svg width="17" height="17" viewBox="0 0 17 17" fill="#fff" stroke="#4a443d" strokeWidth=".6"><path d="M.5 2.500L7.200 1.500v6.500H.5zM8 1.300L16.500 .3V8H8zM.5 9h6.700v6.500L.5 14.500zM8 9h8.500v7.700L8 15.700z" /></svg>
          <Gap $w={7} />
          <svg width="17" height="17" viewBox="0 0 17 17" fill="none">
            <rect x="5.500" y="3.500" width="9.500" height="8" stroke="#4a443d" strokeWidth="3" /><rect x="5.500" y="3.500" width="9.500" height="8" stroke="#fff" strokeWidth="1.500" />
            <path d="M7 14.700h8M11 12v3" stroke="#fff" strokeWidth="1.500" />
            <rect x="1" y="1" width="4" height="5" fill="#94887a" stroke="#fff" strokeWidth="1.300" /><path d="M3 6v8h3" stroke="#fff" strokeWidth="1.200" />
          </svg>
          <Gap $w={7} />
          <svg width="17" height="17" viewBox="0 0 17 17">
            <path d="M1 5.500h3L9 1v14l-5-4.500H1z" fill="#fff" stroke="#4a443d" strokeWidth=".8" />
            <circle cx="11.500" cy="11.500" r="4" fill="#fff" stroke="#e0202a" strokeWidth="1.800" /><path d="M8.800 8.800l5.400 5.400" stroke="#e0202a" strokeWidth="1.800" />
          </svg>
          <Clock>15:57<br />07-05-2016</Clock>
        </Tray>
      </Taskbar>
    </Desktop>
  );
}
